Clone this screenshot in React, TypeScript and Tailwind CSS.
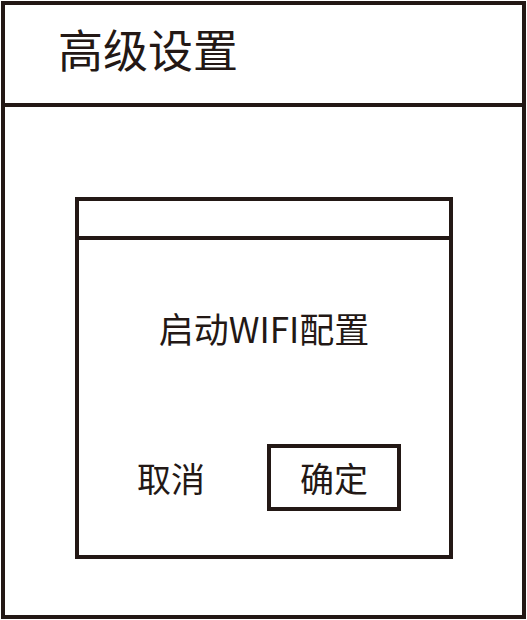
export default function App() {
  const font = { fontFamily: '"Noto Sans CJK SC", "Noto Sans", sans-serif' };
  return (
    <div className="h-[620px] w-[527px] bg-white pl-[1px] pt-[1px] text-[#231815]" style={font}>
      <div className="flex h-[618px] w-[525px] flex-col border-4 border-[#231815]">
        {/* header */}
        <div className="flex h-[102px] shrink-0 items-center border-b-4 border-[#231815] pb-[11px] pl-[53px]">
          <span className="text-[45px] leading-none">高级设置</span>
        </div>

        {/* body */}
        <div className="flex-1 pl-[70px] pt-[90px]">
          <div className="flex h-[362px] w-[378px] flex-col border-4 border-[#231815]">
            <div className="h-[39px] shrink-0 border-b-4 border-[#231815]" />
            <div className="flex flex-col">
              <div className="mt-[70px] text-center text-[35px] leading-none">启动WIFI配置</div>
              <div className="mt-[99px] flex items-center pl-[58px]">
                <button className="text-[34px] leading-none">取消</button>
                <button className="ml-[62px] flex h-[67px] w-[134px] items-center justify-center border-4 border-[#231815] text-[34px] leading-none">
                  确定
                </button>
              </div>
            </div>
          </div>
        </div>
      </div>
    </div>
  );
}
